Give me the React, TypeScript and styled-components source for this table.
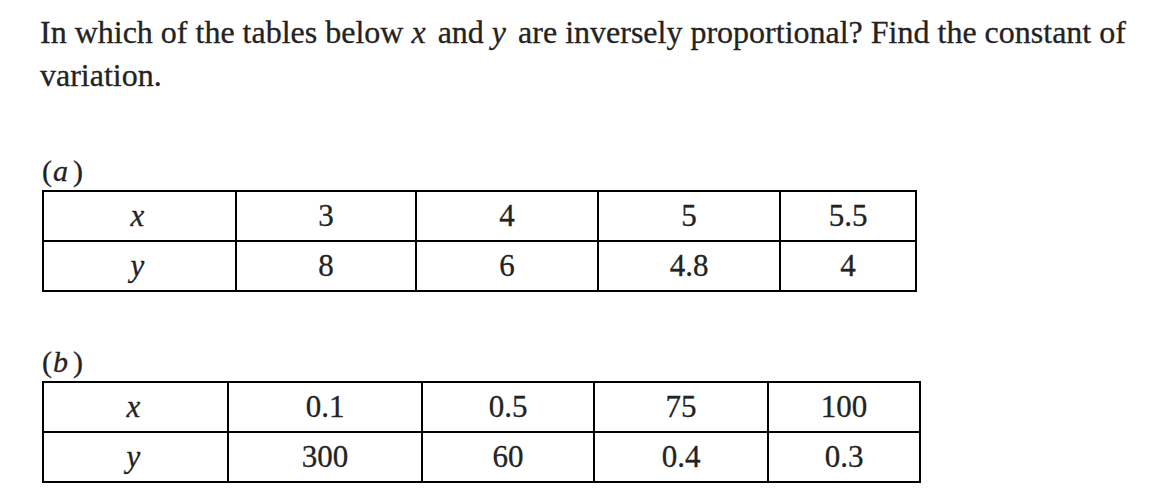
import styled, { createGlobalStyle } from 'styled-components';

const textColor = '#232323';
const serif = '"Liberation Serif", "Times New Roman", serif';

const GlobalStyle = createGlobalStyle`
	html, body {
		margin: 0;
		padding: 0;
		background: #ffffff;
	}
	body {
		font-family: ${serif};
		color: ${textColor};
		-webkit-text-stroke: 0.3px ${textColor};
	}
`;

interface ITableData {
	label: string;
	widths: number[];
	x: string[];
	y: string[];
}

const tables: ITableData[] = [
	{
		label: 'a',
		widths: [193, 180, 182, 182, 136],
		x: ['3', '4', '5', '5.5'],
		y: ['8', '6', '4.8', '4'],
	},
	{
		label: 'b',
		widths: [185, 194, 172, 174, 152],
		x: ['0.1', '0.5', '75', '100'],
		y: ['300', '60', '0.4', '0.3'],
	},
];

const App = () => {
	return (
		<Page>
			<GlobalStyle />
			<Question>
				In which of the tables below <Var>x</Var> and <Var>y</Var> are
				inversely proportional? Find the constant of variation.
			</Question>
			{tables.map((table, i) => (
				<Section key={table.label} first={i === 0}>
					<Label>
						(<Var>{table.label}</Var>)
					</Label>
					<Table>
						<colgroup>
							{table.widths.map((w, j) => (
								<col key={j} style={{ width: w }} />
							))}
						</colgroup>
						<tbody>
							<Row>
								<Cell>
									<Var>x</Var>
								</Cell>
								{table.x.map((v, j) => (
									<Cell key={j}>{v}</Cell>
								))}
							</Row>
							<Row>
								<Cell>
									<Var>y</Var>
								</Cell>
								{table.y.map((v, j) => (
									<Cell key={j}>{v}</Cell>
								))}
							</Row>
						</tbody>
					</Table>
				</Section>
			))}
		</Page>
	);
};

const Page = styled.div`
	width: 1162px;
	height: 498px;
	overflow: hidden;
	padding: 11px 0 0 40px;
	box-sizing: border-box;
`;

const Question = styled.p`
	margin: 0;
	width: 1100px;
	font-size: 32px;
	line-height: 43px;
`;

const Var = styled.i`
	font-style: italic;
	margin-right: 4px;
`;

const Section = styled.div<{ first?: boolean }>`
	margin-top: ${props => (props.first ? '57px' : '53px')};
	padding-left: 2px;
`;

const Label = styled.div`
	font-size: 30px;
	line-height: 34px;
	height: 36px;
	letter-spacing: 1px;
`;

const Table = styled.table`
	border-collapse: collapse;
	table-layout: fixed;
	font-family: ${serif};
	font-size: 31px;
	color: ${textColor};
`;

const Row = styled.tr`
	height: 50px;
`;

const Cell = styled.td`
	border: 2px solid #000;
	text-align: center;
	vertical-align: middle;
	padding: 0;
	line-height: 30px;
	font-family: ${serif};
`;

export default App;
